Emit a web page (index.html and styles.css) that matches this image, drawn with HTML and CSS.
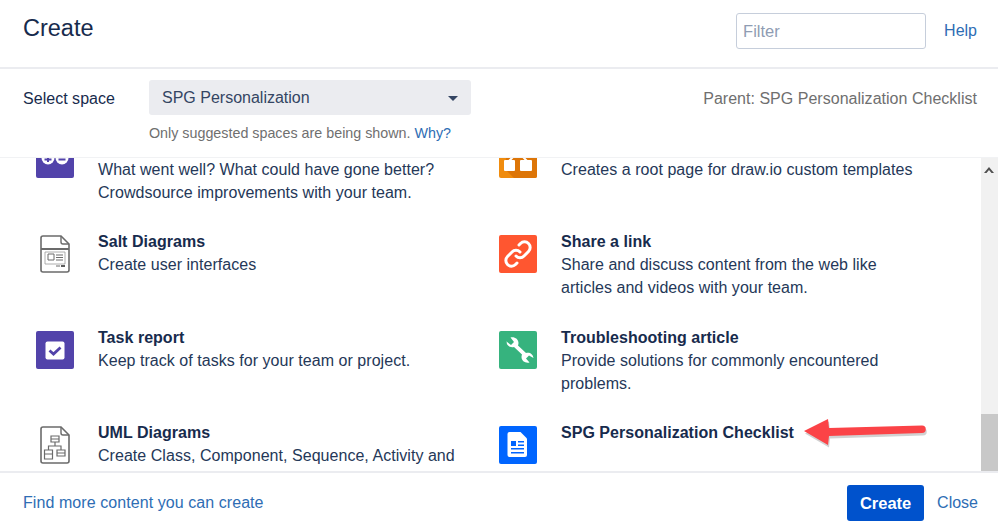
FILE: index.html
```html
<!DOCTYPE html>
<html lang="en">
<head>
<meta charset="utf-8">
<title>Create</title>
<link rel="stylesheet" href="styles.css">
</head>
<body>
<div class="dialog">
  <header class="head">
    <h1 class="title">Create</h1>
    <div class="filter">Filter</div>
    <a class="link help">Help</a>
  </header>
  <section class="space">
    <div class="space-label">Select space</div>
    <div class="space-mid">
      <div class="select"><span>SPG Personalization</span><i class="caret"></i></div>
      <div class="hint">Only suggested spaces are being shown. <a class="link">Why?</a></div>
    </div>
    <div class="parent">Parent: SPG Personalization Checklist</div>
  </section>
  <main class="body">
    <div class="list">
      <div class="grid">
        <div class="item">
          <svg class="icon" viewBox="0 0 38 38"><rect width="38" height="38" rx="2" fill="#5243aa"/><circle cx="12" cy="18" r="6.500" fill="#fff"/><circle cx="26" cy="18" r="6.500" fill="#fff"/><path d="M12 15v7M8.500 19.500h7M22.500 19.500h7" stroke="#5243aa" stroke-width="2"/></svg>
          <div class="text clipped"><p>What went well? What could have gone better? Crowdsource improvements with your team.</p></div>
        </div>
        <div class="item">
          <svg class="icon" viewBox="0 0 38 38"><rect width="38" height="38" rx="2" fill="#f08c0e"/><path d="M5 28L15 38H36a2 2 0 0 0 2-2V10L30 14H8z" fill="#dd7507"/><path d="M10 21L15 16M28 21L23 16" stroke="#fff" stroke-width="2"/><rect x="5" y="20" width="11" height="11" rx="1" fill="#fff"/><rect x="21" y="20" width="12" height="11" rx="1" fill="#fff"/></svg>
          <div class="text clipped"><p>Creates a root page for draw.io custom templates</p></div>
        </div>
        <div class="item">
          <svg class="icon" viewBox="0 0 38 38" fill="none" stroke="#6b6b6b"><path d="M7 1h18l8 8v26a2 2 0 0 1-2 2H7a2 2 0 0 1-2-2V3a2 2 0 0 1 2-2z" stroke-width="1.600"/><path d="M25 1v6a2 2 0 0 0 2 2h6" stroke-width="1.400"/><path d="M5 14h28" stroke-width="2"/><path d="M9 17h20v12H9z" stroke-width=".8" stroke="#999"/><path d="M12 19h6v6h-6zM20 20h7M20 22.500h7M20 25h7M20 31h4" stroke-width="1"/><path d="M25 31h4" stroke-width="1.600" stroke="#333"/></svg>
          <div class="text"><h3>Salt Diagrams</h3><p>Create user interfaces</p></div>
        </div>
        <div class="item">
          <svg class="icon" viewBox="0 0 38 38"><rect width="38" height="38" rx="2" fill="#ff5630"/><path d="M17 21a5.500 5.500 0 0 0 8 0l4.500-4.500a5.500 5.500 0 0 0-8-8L20 10M21 17a5.500 5.500 0 0 0-8 0l-4.500 4.500a5.500 5.500 0 0 0 8 8L18 28" fill="none" stroke="#fff" stroke-width="3" stroke-linecap="round"/></svg>
          <div class="text"><h3>Share a link</h3><p>Share and discuss content from the web like articles and videos with your team.</p></div>
        </div>
        <div class="item">
          <svg class="icon" viewBox="0 0 38 38"><rect width="38" height="38" rx="2" fill="#5243aa"/><rect x="9.500" y="10.500" width="19" height="18" rx="2" fill="#fff"/><path d="M13.500 19.500l4 3.500 7-6.500" fill="none" stroke="#5243aa" stroke-width="2.800"/></svg>
          <div class="text"><h3>Task report</h3><p>Keep track of tasks for your team or project.</p></div>
        </div>
        <div class="item">
          <svg class="icon" viewBox="0 0 38 38"><rect width="38" height="38" rx="2" fill="#36b37e"/><path d="M7.500 10.500L12 14l3-3-3.500-4.500c4-1 8 1.500 8 5.500 0 1-.2 1.700-.5 2.500l8 7.500c3.500-1.200 7 1 7.500 5l-4.500-2.500-3 3 3.500 4c-4 1-8-1.500-8-5.500 0-1 .2-1.700.5-2.500l-8-7.500c-4 1.200-8.500-2-7-6z" fill="#fff"/></svg>
          <div class="text"><h3>Troubleshooting article</h3><p>Provide solutions for commonly encountered problems.</p></div>
        </div>
        <div class="item">
          <svg class="icon" viewBox="0 0 38 38" fill="none" stroke="#6b6b6b"><path d="M7 1h18l8 8v26a2 2 0 0 1-2 2H7a2 2 0 0 1-2-2V3a2 2 0 0 1 2-2z" stroke-width="1.600"/><path d="M25 1v6a2 2 0 0 0 2 2h6" stroke-width="1.400"/><path d="M15 10h8v6h-8zM15 13h8M8.500 24h8v9h-8zM8.500 28h8M21 24h8v6h-8zM21 27h8M19 16v4M12.500 24v-4h12.500v4" stroke-width="1.200"/></svg>
          <div class="text"><h3>UML Diagrams</h3><p>Create Class, Component, Sequence, Activity and</p></div>
        </div>
        <div class="item">
          <svg class="icon" viewBox="0 0 38 38"><rect width="38" height="38" rx="2" fill="#0065ff"/><path d="M8.500 8a2 2 0 0 1 2-2h11l6.500 6.500V29a2 2 0 0 1-2 2H10.500a2 2 0 0 1-2-2z" fill="#fff"/><path d="M12 15h5v5h-5zM19 15h6v1.500h-6zM19 18.500h6V20h-6zM12 22h13v1.500H12zM12 26h13v1.500H12z" fill="#0065ff"/></svg>
          <div class="text"><h3>SPG Personalization Checklist</h3></div>
        </div>
      </div>
    </div>
    <div class="scrollbar">
      <svg class="scroll-up" viewBox="0 0 10 6"><path d="M5 0l5 6H7.500L5 3 2.500 6H0z" fill="#505050"/></svg>
      <div class="thumb"></div>
    </div>
    <svg class="arrow" viewBox="0 0 140 40" aria-hidden="true">
      <path d="M6 18L30 6l1 9 93-2.500a3.500 3.500 0 0 1 0 7.500l-93 3-1 9z" fill="#000" opacity=".18" transform="translate(1 2.500)"/>
      <path d="M6 18L30 6l1 9 93-2.500a3.500 3.500 0 0 1 0 7.500l-93 3-1 9z" fill="#fb4347"/>
    </svg>
  </main>
  <footer class="foot">
    <a class="link more">Find more content you can create</a>
    <button class="btn">Create</button>
    <a class="link close">Close</a>
  </footer>
</div>
</body>
</html>
```
FILE: styles.css
```css
* { box-sizing: border-box; }
html, body { margin: 0; height: 100%; }
body { background: #fff; font-family: "Liberation Sans", Arial, sans-serif; font-size: 16px; color: #172b4d; overflow: hidden; }
.dialog { display: flex; flex-direction: column; width: 998px; height: 521px; }
.link { color: #2e6db4; }

.head { display: flex; align-items: center; height: 69px; padding: 0 21px 6px 23px; border-bottom: 2px solid #ebecf0; flex: none; }
.title { margin: 0 auto 0 0; font-size: 23.500px; font-weight: 400; color: #172b4d; position: relative; top: -2px; }
.filter { width: 190px; height: 36px; padding: 0 6px; line-height: 34px; border: 1px solid #c6cedb; border-radius: 3px; color: #8f9cb3; font-size: 16.500px; }
.help { margin-left: 18px; font-size: 16px; }

.space { display: flex; height: 88px; padding: 11px 21px 0 23px; flex: none; }
.space-label { width: 126px; line-height: 36px; margin-top: 1px; letter-spacing: .03px; }
.space-mid { width: 322px; }
.select { display: flex; align-items: center; justify-content: space-between; height: 35px; padding: 0 13px; background: #ebecf0; border-radius: 3px; color: #344563; }
.caret { width: 0; height: 0; border: 5px solid transparent; border-top-color: #344563; border-bottom: 0; margin-top: 1px; }
.hint { margin-top: 10px; font-size: 14.300px; color: #6f6f6f; white-space: nowrap; }
.parent { margin-left: auto; line-height: 36px; margin-top: 1px; color: #6f6f6f; letter-spacing: .02px; }

.body { position: relative; display: flex; flex: 1; min-height: 0; border-top: 1px solid #f1f2f4; }
.list { flex: 1; overflow: hidden; }
.grid { display: grid; grid-template-columns: 463px 1fr; grid-auto-rows: 95.400px; margin-top: -18px; padding-left: 36px; }
.item { display: flex; gap: 24px; }
.icon { width: 38px; height: 38px; flex: none; }
.text { margin-top: -5px; width: 364px; }
.text.clipped { padding-top: 23px; }
.item:nth-child(even) .text { width: 360px; }
.text h3 { margin: 0; font-size: 16px; line-height: 23px; font-weight: 700; letter-spacing: .03px; color: #172b4d; white-space: nowrap; }
.text p { margin: 0; font-size: 16px; line-height: 23px; letter-spacing: .04px; color: #253858; }

.scrollbar { position: relative; width: 17px; background: #f1f1f1; display: flex; flex-direction: column; justify-content: flex-end; flex: none; }
.scroll-up { position: absolute; top: 9px; left: 3px; width: 10px; height: 6px; }
.thumb { height: 57px; background: #c8c8c8; }
.arrow { position: absolute; left: 798px; top: 255px; width: 140px; height: 40px; }

.foot { display: flex; align-items: center; height: 50px; padding: 12px 20px 0 23px; border-top: 2px solid #ebecf0; flex: none; }
.more { margin-right: auto; letter-spacing: .07px; }
.btn { width: 77px; height: 36px; border: 0; border-radius: 3px; background: #0052cc; color: #fff; font: 700 16.500px "Liberation Sans", Arial, sans-serif; }
.close { margin-left: 13px; }
```
